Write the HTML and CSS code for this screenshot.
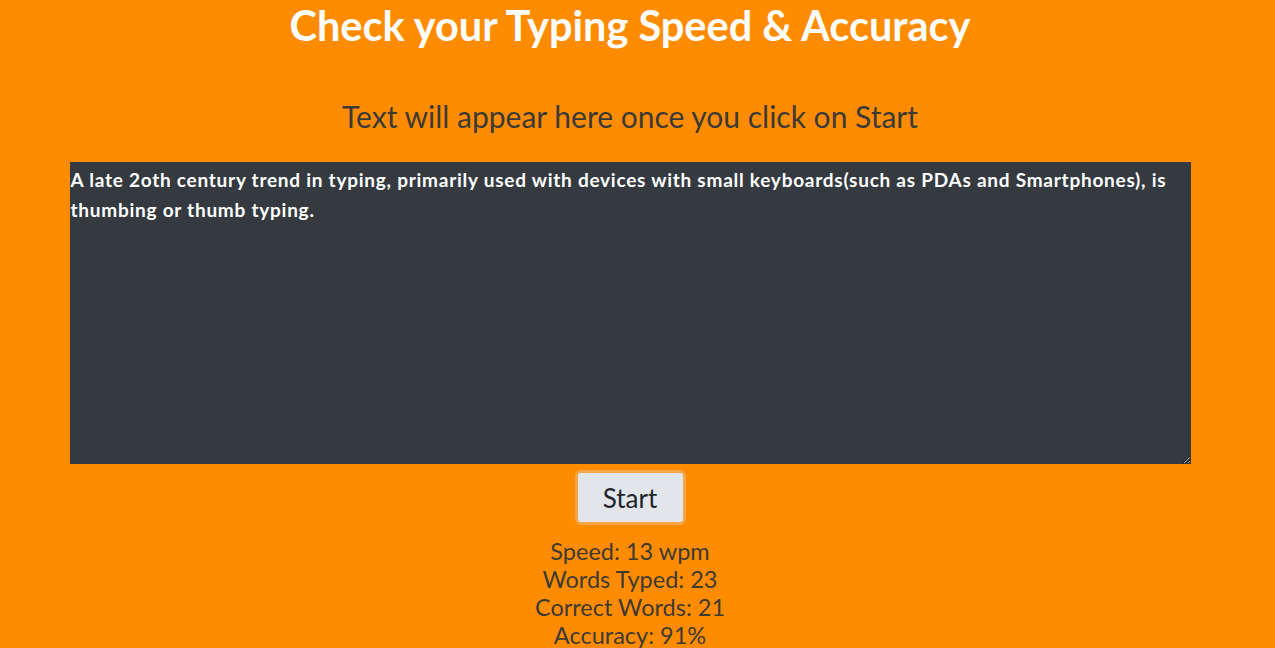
FILE: index.html
```html
<!DOCTYPE html>
<html>
<head>
<meta charset="utf-8">
<link rel="stylesheet" href="styles.css">
</head>
<body>
<div class="page">
  <h1 class="title">Check your Typing Speed &amp; Accuracy</h1>
  <h2 class="prompt">Text will appear here once you click on Start</h2>
  <textarea class="typing" spellcheck="false">A late 2oth century trend in typing, primarily used with devices with small keyboards(such as PDAs and Smartphones), is thumbing or thumb typing.</textarea>
  <div class="actions"><button class="start">Start</button></div>
  <div class="stats">
    <div>Speed: 13 wpm</div>
    <div>Words Typed: 23</div>
    <div>Correct Words: 21</div>
    <div>Accuracy: 91%</div>
  </div>
</div>
</body>
</html>
```
FILE: styles.css
```css
html, body {
  margin: 0;
  padding: 0;
  background: #ff8c00;
}
body {
  font-family: "Lato", "Open Sans", sans-serif;
  overflow: hidden;
}
.page {
  width: 1260px;
  display: flex;
  flex-direction: column;
  align-items: center;
}
.title {
  margin: 0;
  padding-top: 0;
  font-size: 41.5px;
  line-height: 50px;
  font-weight: 700;
  color: #ffffff;
}
.prompt {
  margin: 49px 0 0 0;
  font-size: 30px;
  line-height: 34px;
  font-weight: 400;
  color: #3b3a36;
}
.typing {
  box-sizing: border-box;
  margin-top: 29px;
  width: 1121px;
  height: 302px;
  background: #343a40;
  color: #ffffff;
  border: none;
  padding: 3px 1px;
  font-family: inherit;
  font-weight: 700;
  font-size: 19px;
  letter-spacing: 0.75px;
  line-height: 30px;
  resize: vertical;
  outline: none;
}
.actions {
  margin-top: 6px;
}
.start {
  width: 111px;
  height: 55px;
  background: #e2e6ea;
  border: 3px solid #f5a54a;
  border-radius: 6px;
  font-family: inherit;
  font-size: 26px;
  color: #212529;
  padding: 0;
}
.stats {
  margin-top: 12px;
  text-align: center;
  font-size: 23.5px;
  line-height: 28px;
  color: #3d3a33;
}
```
